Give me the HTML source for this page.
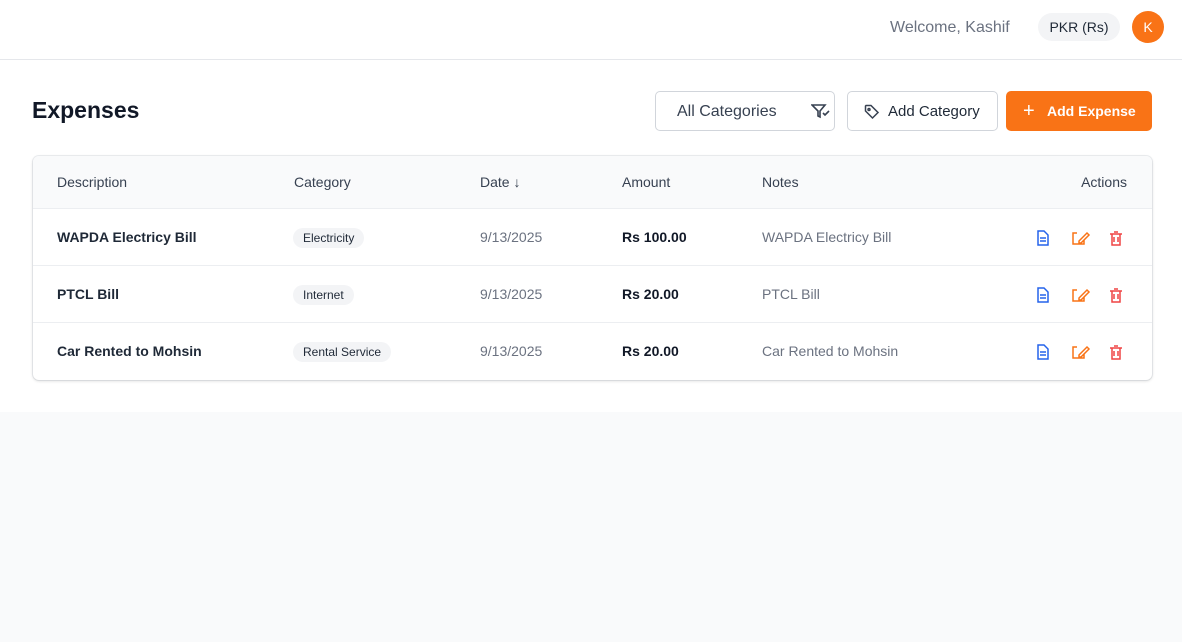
<!DOCTYPE html>
<html><head><style>
*{box-sizing:border-box;margin:0;padding:0}
body{width:1182px;height:642px;background:#f9fafb;font-family:"Liberation Sans",sans-serif;color:#111827;position:relative;overflow:hidden}
.top{position:absolute;left:0;top:0;width:1182px;height:60px;background:#fff;border-bottom:1px solid #e5e7eb}
.main{position:absolute;left:0;top:60px;width:1182px;height:352px;background:#fff}
.abs{position:absolute}
.card{position:absolute;left:33px;top:156px;width:1119px;height:224px;background:#fff;border-radius:6px;box-shadow:0 1px 3px rgba(0,0,0,.15),0 0 0 1px #eef0f3;overflow:hidden}
.hdr{height:53px;background:#f9fafb;border-bottom:1px solid #eceef1}
.row{height:57px;border-bottom:1px solid #eceef1;position:relative}
.cell{position:absolute;top:0;line-height:57px;font-size:14px}
.hdr .cell{line-height:53px;font-size:14px;color:#374151}
.tag{display:inline-block;background:#f3f4f6;border-radius:10px;font-size:12px;line-height:20px;padding:0 10px;color:#1f2937;vertical-align:middle}
.btn{position:absolute;top:91px;height:40px;border-radius:5px;font-size:15px;line-height:38px}
</style></head><body>
<div class="top">
<div class="abs" style="left:890px;top:19px;font-size:16px;color:#6b7280">Welcome, Kashif</div>
<div class="abs" style="left:1038px;top:13px;width:82px;height:28px;border-radius:14px;background:#f3f4f6;font-size:14px;line-height:28px;text-align:center;color:#1f2937">PKR (Rs)</div>
<div class="abs" style="left:1132px;top:11px;width:32px;height:32px;border-radius:16px;background:#f97316;color:#fff;font-size:14px;line-height:32px;text-align:center">K</div>
</div>
<div class="main">
<div class="abs" style="left:32px;top:37px;font-size:23px;font-weight:bold">Expenses</div>
</div>
<div class="btn" style="left:655px;width:180px;border:1px solid #d1d5db;background:#fff;color:#374151;padding-left:21px;font-size:16px;line-height:40px">All Categories
<svg class="abs" style="left:155px;top:11px" width="20" height="16" viewBox="0 0 20 16" fill="none" stroke="#374151" stroke-width="1.6"><path d="M1 2h13l-5 6v6l-2-1V8z"/><path d="M12 10l2 2 4-4"/></svg></div>
<div class="btn" style="left:847px;width:151px;border:1px solid #d1d5db;background:#fff;color:#1f2937;padding-left:40px;line-height:40px">
<svg class="abs" style="left:16px;top:12px" width="16" height="16" viewBox="0 0 16 16" fill="none" stroke="#374151" stroke-width="1.5"><path d="M1.5 2v5l7 7 5.5-5.5-7-7H2z"/><circle cx="5" cy="5.5" r="1"/></svg>Add Category</div>
<div class="btn" style="left:1006px;width:146px;background:#f97316;color:#fff;padding-left:41px;line-height:40px;font-weight:bold;font-size:14px">
<span class="abs" style="left:17px;top:0;font-weight:normal;font-size:20px">+</span>Add Expense</div>
<div class="card">
<div class="hdr" style="position:relative">
<div class="cell" style="left:24px">Description</div>
<div class="cell" style="left:261px">Category</div>
<div class="cell" style="left:447px">Date ↓</div>
<div class="cell" style="left:589px">Amount</div>
<div class="cell" style="left:729px">Notes</div>
<div class="cell" style="right:25px">Actions</div>
</div>
<div class="row"><div class="cell" style="left:24px;font-weight:bold;color:#1f2937">WAPDA Electricy Bill</div><div class="cell" style="left:260px"><span class="tag">Electricity</span></div><div class="cell" style="left:447px;color:#6b7280">9/13/2025</div><div class="cell" style="left:589px;font-weight:bold">Rs 100.00</div><div class="cell" style="left:729px;color:#6b7280">WAPDA Electricy Bill</div>
<div class="cell" style="left:1002px;top:21px;line-height:0"><svg width="100" height="16" viewBox="0 0 100 16" fill="none" stroke-width="1.5"><g stroke="#2563eb"><path d="M3 1h6l4 4v10H3z M5 8h6M5 11h6"/></g><g stroke="#f97316"><path d="M42 3h-4v11h11v-4M44 11l8-8 2 2-8 8h-2z"/></g><g stroke="#ef4444"><path d="M75 4h12M77 4v11h8V4M79 2h4M79 7v5M83 7v5"/></g></svg></div></div>
<div class="row"><div class="cell" style="left:24px;font-weight:bold;color:#1f2937">PTCL Bill</div><div class="cell" style="left:260px"><span class="tag">Internet</span></div><div class="cell" style="left:447px;color:#6b7280">9/13/2025</div><div class="cell" style="left:589px;font-weight:bold">Rs 20.00</div><div class="cell" style="left:729px;color:#6b7280">PTCL Bill</div>
<div class="cell" style="left:1002px;top:21px;line-height:0"><svg width="100" height="16" viewBox="0 0 100 16" fill="none" stroke-width="1.5"><g stroke="#2563eb"><path d="M3 1h6l4 4v10H3z M5 8h6M5 11h6"/></g><g stroke="#f97316"><path d="M42 3h-4v11h11v-4M44 11l8-8 2 2-8 8h-2z"/></g><g stroke="#ef4444"><path d="M75 4h12M77 4v11h8V4M79 2h4M79 7v5M83 7v5"/></g></svg></div></div>
<div class="row" style="border-bottom:none"><div class="cell" style="left:24px;font-weight:bold;color:#1f2937">Car Rented to Mohsin</div><div class="cell" style="left:260px"><span class="tag">Rental Service</span></div><div class="cell" style="left:447px;color:#6b7280">9/13/2025</div><div class="cell" style="left:589px;font-weight:bold">Rs 20.00</div><div class="cell" style="left:729px;color:#6b7280">Car Rented to Mohsin</div>
<div class="cell" style="left:1002px;top:21px;line-height:0"><svg width="100" height="16" viewBox="0 0 100 16" fill="none" stroke-width="1.5"><g stroke="#2563eb"><path d="M3 1h6l4 4v10H3z M5 8h6M5 11h6"/></g><g stroke="#f97316"><path d="M42 3h-4v11h11v-4M44 11l8-8 2 2-8 8h-2z"/></g><g stroke="#ef4444"><path d="M75 4h12M77 4v11h8V4M79 2h4M79 7v5M83 7v5"/></g></svg></div></div>
</div>
</body></html>
